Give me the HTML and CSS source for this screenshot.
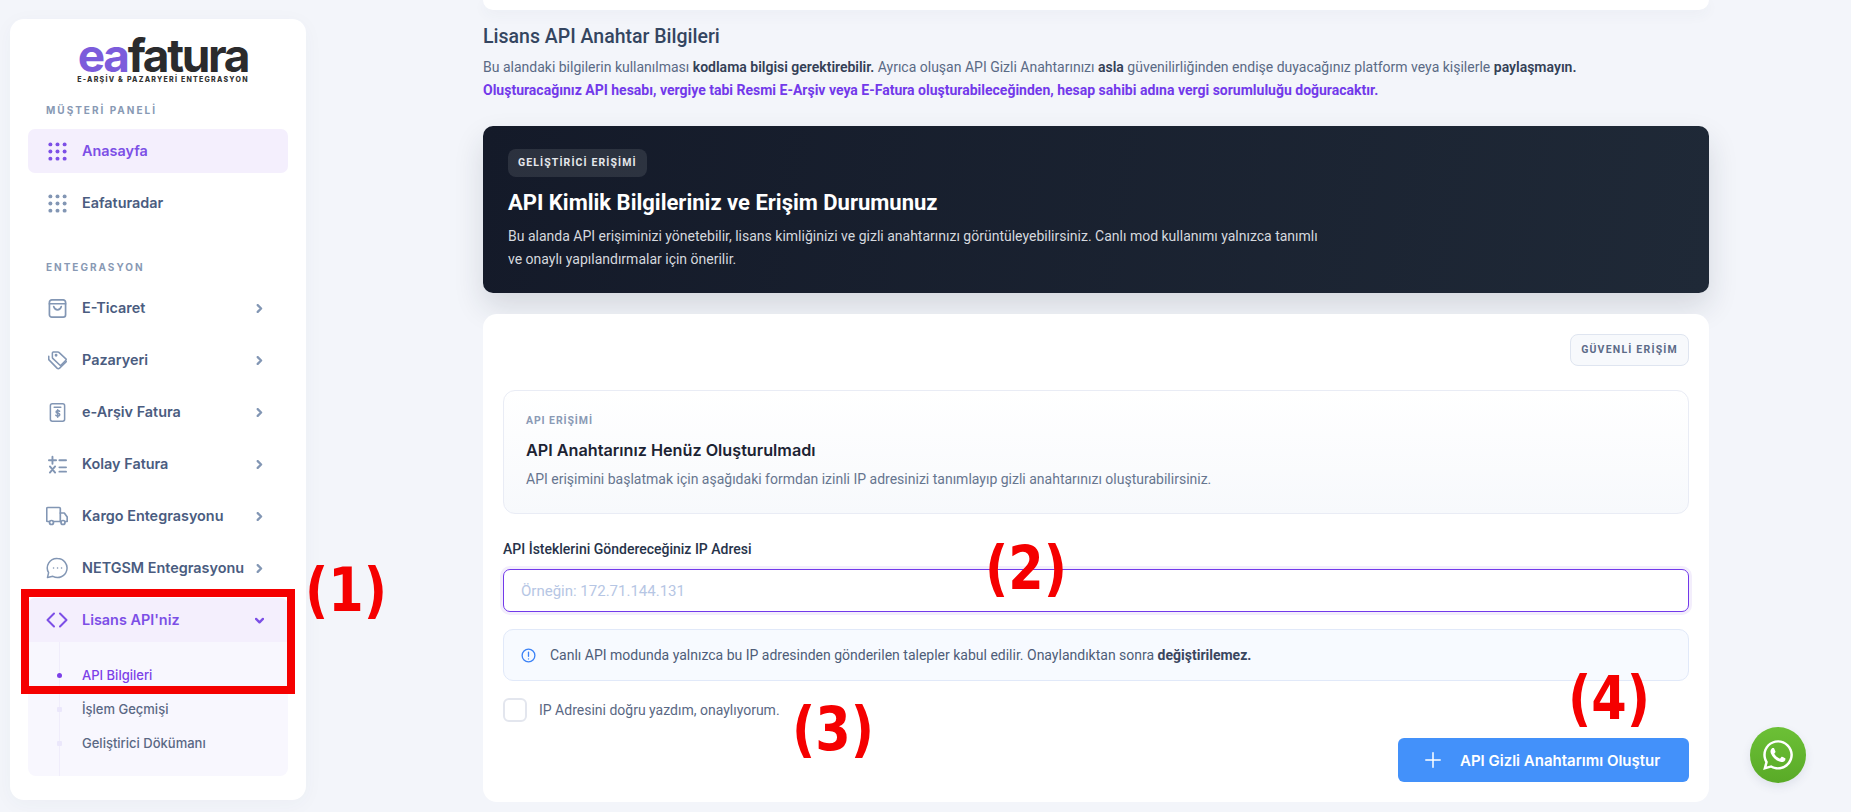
FILE: index.html
```html
<!DOCTYPE html>
<html lang="tr">
<head>
    <meta charset="UTF-8">
    <title>Lisans API Anahtar Bilgileri</title>
    <link rel="stylesheet" href="styles.css">
</head>
<body>
    <div class="page">
        <aside class="sidebar">
            <div class="logo">
                <div class="logo-name"><span class="logo-ea">ea</span>fatura</div>
                <div class="logo-sub">E-ARŞİV &amp; PAZARYERİ ENTEGRASYON</div>
            </div>

            <div class="nav-label">MÜŞTERİ PANELİ</div>
            <nav class="nav">
                <a class="nav-item active">
                    <svg class="nav-icon" viewBox="0 0 20 20" fill="currentColor"><circle cx="2.500" cy="2.500" r="2.100"/><circle cx="10" cy="2.500" r="2.100"/><circle cx="17.500" cy="2.500" r="2.100"/><circle cx="2.500" cy="10" r="2.100"/><circle cx="10" cy="10" r="2.100"/><circle cx="17.500" cy="10" r="2.100"/><circle cx="2.500" cy="17.500" r="2.100"/><circle cx="10" cy="17.500" r="2.100"/><circle cx="17.500" cy="17.500" r="2.100"/></svg>
                    <span class="nav-text">Anasayfa</span>
                </a>
                <a class="nav-item">
                    <svg class="nav-icon" viewBox="0 0 20 20" fill="currentColor"><circle cx="2.500" cy="2.500" r="2.100"/><circle cx="10" cy="2.500" r="2.100"/><circle cx="17.500" cy="2.500" r="2.100"/><circle cx="2.500" cy="10" r="2.100"/><circle cx="10" cy="10" r="2.100"/><circle cx="17.500" cy="10" r="2.100"/><circle cx="2.500" cy="17.500" r="2.100"/><circle cx="10" cy="17.500" r="2.100"/><circle cx="17.500" cy="17.500" r="2.100"/></svg>
                    <span class="nav-text">Eafaturadar</span>
                </a>
            </nav>

            <div class="nav-label second">ENTEGRASYON</div>
            <nav class="nav">
                <a class="nav-item">
                    <svg class="nav-icon" viewBox="0 0 20 20" fill="none" stroke="currentColor" stroke-width="1.800" stroke-linecap="round" stroke-linejoin="round"><path d="M4 1h12a2.500 2.500 0 0 1 2.500 2.500v13A2.500 2.500 0 0 1 16 19H4a2.500 2.500 0 0 1-2.500-2.500v-13A2.500 2.500 0 0 1 4 1z"/><path d="M1.500 5h17"/><path d="M6 8c.8 2.400 2.200 3.500 4 3.500s3.200-1.100 4-3.500"/></svg>
                    <span class="nav-text">E-Ticaret</span>
                    <svg class="chevron" viewBox="0 0 10 10" fill="none" stroke="currentColor" stroke-width="2.500" stroke-linecap="round" stroke-linejoin="round"><path d="M3 1.200L6.800 5 3 8.800"/></svg>
                </a>
                <a class="nav-item">
                    <svg class="nav-icon" viewBox="0 0 20 20" fill="none" stroke="currentColor" stroke-width="1.600" stroke-linecap="round" stroke-linejoin="round"><path d="M5.500 1h5a1.500 1.500 0 0 1 1 .4l7.300 6.900a1 1 0 0 1 0 1.400l-5 5.100a1 1 0 0 1-1.400 0L5 7.800a1.500 1.500 0 0 1-.4-1V2.300A1.300 1.300 0 0 1 5.500 1z"/><path d="M.8 5.500v3.600l8.700 8.900a2 2 0 0 0 2.700 0l7-6.800"/><circle cx="8.500" cy="4.500" r=".7"/></svg>
                    <span class="nav-text">Pazaryeri</span>
                    <svg class="chevron" viewBox="0 0 10 10" fill="none" stroke="currentColor" stroke-width="2.500" stroke-linecap="round" stroke-linejoin="round"><path d="M3 1.200L6.800 5 3 8.800"/></svg>
                </a>
                <a class="nav-item">
                    <svg class="nav-icon" viewBox="0 0 20 20" fill="none" stroke="currentColor" stroke-width="1.600" stroke-linecap="round" stroke-linejoin="round"><rect x="2.500" y=".8" width="15" height="18.400" rx="2"/><path d="M6.500 4.500h7"/><path d="M12.200 8.700c-.5-.8-3.700-1-3.700.7 0 2 3.900 1 3.900 3 0 1.700-3.500 1.500-4.100.5"/><path d="M10.200 7.200v7.800"/></svg>
                    <span class="nav-text">e-Arşiv Fatura</span>
                    <svg class="chevron" viewBox="0 0 10 10" fill="none" stroke="currentColor" stroke-width="2.500" stroke-linecap="round" stroke-linejoin="round"><path d="M3 1.200L6.800 5 3 8.800"/></svg>
                </a>
                <a class="nav-item">
                    <svg class="nav-icon" viewBox="0 0 20 20" fill="none" stroke="currentColor" stroke-width="2" stroke-linecap="round"><path d="M1 5.500h7.500M4.700 1.800v7.400M12 5.500h7"/><path d="M2 12l5.500 6.500M7.500 12L2 18.500M12 13h7M12 17.500h7"/></svg>
                    <span class="nav-text">Kolay Fatura</span>
                    <svg class="chevron" viewBox="0 0 10 10" fill="none" stroke="currentColor" stroke-width="2.500" stroke-linecap="round" stroke-linejoin="round"><path d="M3 1.200L6.800 5 3 8.800"/></svg>
                </a>
                <a class="nav-item">
                    <svg class="nav-icon wide" viewBox="0 0 22 20" fill="none" stroke="currentColor" stroke-width="1.700" stroke-linecap="round" stroke-linejoin="round"><path d="M3.500 15.500h-2a.8.8 0 0 1-.8-.8V2.500a1 1 0 0 1 1-1h11.600a1 1 0 0 1 1 1v13h-7"/><path d="M14.300 7h4l2.900 4v4.500h-1.700M14.300 15.500h.7"/><circle cx="5.500" cy="16.500" r="2"/><circle cx="17" cy="16.500" r="2"/></svg>
                    <span class="nav-text">Kargo Entegrasyonu</span>
                    <svg class="chevron" viewBox="0 0 10 10" fill="none" stroke="currentColor" stroke-width="2.500" stroke-linecap="round" stroke-linejoin="round"><path d="M3 1.200L6.800 5 3 8.800"/></svg>
                </a>
                <a class="nav-item">
                    <svg class="nav-icon wide" viewBox="0 0 22 22" fill="none" stroke="currentColor" stroke-width="1.500" stroke-linecap="round" stroke-linejoin="round"><path d="M11.500 1.500a9.500 9.500 0 1 1-4.600 17.800L1.500 20.500l1.100-4.800A9.500 9.500 0 0 1 11.500 1.500z"/><path d="M7.500 11h.1M11.500 11h.1M15.500 11h.1"/></svg>
                    <span class="nav-text">NETGSM Entegrasyonu</span>
                    <svg class="chevron" viewBox="0 0 10 10" fill="none" stroke="currentColor" stroke-width="2.500" stroke-linecap="round" stroke-linejoin="round"><path d="M3 1.200L6.800 5 3 8.800"/></svg>
                </a>
                <div class="nav-group">
                    <a class="nav-item open">
                        <svg class="nav-icon wide" viewBox="0 0 22 20" fill="none" stroke="currentColor" stroke-width="2" stroke-linecap="round" stroke-linejoin="round"><path d="M8 3.500L1.500 10 8 16.500M14 3.500l6.500 6.500-6.500 6.500"/></svg>
                        <span class="nav-text">Lisans API'niz</span>
                        <svg class="chevron" viewBox="0 0 10 10" fill="none" stroke="currentColor" stroke-width="2.600" stroke-linecap="round" stroke-linejoin="round"><path d="M1.200 3.200L5 7l3.800-3.800"/></svg>
                    </a>
                    <div class="subnav">
                        <ul class="subnav-list">
                            <li class="active">API Bilgileri</li>
                            <li>İşlem Geçmişi</li>
                            <li>Geliştirici Dökümanı</li>
                        </ul>
                    </div>
                </div>
            </nav>
        </aside>

        <main class="main">
            <div class="top-strip"></div>

            <h2 class="page-title">Lisans API Anahtar Bilgileri</h2>
            <p class="page-text">Bu alandaki bilgilerin kullanılması <b>kodlama bilgisi gerektirebilir.</b> Ayrıca oluşan API Gizli Anahtarınızı <b>asla</b> güvenilirliğinden endişe duyacağınız platform veya kişilerle <b>paylaşmayın.</b></p>
            <p class="page-text warn">Oluşturacağınız API hesabı, vergiye tabi Resmi E-Arşiv veya E-Fatura oluşturabileceğinden, hesap sahibi adına vergi sorumluluğu doğuracaktır.</p>

            <section class="banner">
                <span class="banner-badge">GELİŞTİRİCİ ERİŞİMİ</span>
                <h3 class="banner-title">API Kimlik Bilgileriniz ve Erişim Durumunuz</h3>
                <p class="banner-text">Bu alanda API erişiminizi yönetebilir, lisans kimliğinizi ve gizli anahtarınızı görüntüleyebilirsiniz. Canlı mod kullanımı yalnızca tanımlı ve onaylı yapılandırmalar için önerilir.</p>
            </section>

            <section class="card">
                <div class="card-head">
                    <span class="secure-badge">GÜVENLİ ERİŞİM</span>
                </div>

                <div class="status-box">
                    <div class="status-label">API ERİŞİMİ</div>
                    <div class="status-title">API Anahtarınız Henüz Oluşturulmadı</div>
                    <div class="status-text">API erişimini başlatmak için aşağıdaki formdan izinli IP adresinizi tanımlayıp gizli anahtarınızı oluşturabilirsiniz.</div>
                </div>

                <label class="field-label" for="ipInput">API İsteklerini Göndereceğiniz IP Adresi</label>
                <input class="field-input" id="ipInput" type="text" placeholder="Örneğin: 172.71.144.131">

                <div class="info-box">
                    <svg class="info-icon" viewBox="0 0 16 16" fill="none" stroke="currentColor" stroke-width="1.400" stroke-linecap="round"><circle cx="8" cy="8" r="6.800"/><path d="M8 4.300v4.500M8 11.500v.1"/></svg>
                    <span>Canlı API modunda yalnızca bu IP adresinden gönderilen talepler kabul edilir. Onaylandıktan sonra <b>değiştirilemez.</b></span>
                </div>

                <label class="check-row">
                    <span class="check-box"></span>
                    <span>IP Adresini doğru yazdım, onaylıyorum.</span>
                </label>

                <div class="card-actions">
                    <button class="create-btn">
                        <svg class="plus-icon" viewBox="0 0 16 16" fill="none" stroke="currentColor" stroke-width="1.500" stroke-linecap="round"><path d="M8 .8v14.400M.8 8h14.400"/></svg>
                        API Gizli Anahtarımı Oluştur
                    </button>
                </div>
            </section>
        </main>
    </div>

    <a class="whatsapp">
        <svg viewBox="0 0 448 512" fill="currentColor"><path d="M380.9 97.1C339 55.1 283.2 32 223.9 32c-122.400 0-222 99.600-222 222 0 39.100 10.200 77.300 29.600 111L0 480l117.700-30.900c32.400 17.700 68.900 27 106.100 27h.1c122.300 0 224.100-99.600 224.100-222 0-59.300-25.200-115-67.100-157zm-157 341.600c-33.200 0-65.700-8.900-94-25.700l-6.700-4-69.800 18.300L72 359.200l-4.400-7c-18.500-29.400-28.200-63.300-28.200-98.200 0-101.700 82.800-184.500 184.600-184.500 49.300 0 95.600 19.200 130.400 54.100 34.800 34.900 56.200 81.200 56.100 130.500 0 101.800-84.900 184.600-186.600 184.600zm101.200-138.200c-5.500-2.800-32.800-16.200-37.900-18-5.100-1.900-8.800-2.800-12.500 2.800-3.700 5.600-14.300 18-17.600 21.800-3.200 3.700-6.500 4.200-12 1.400-32.600-16.300-54-29.100-75.500-66-5.700-9.800 5.700-9.100 16.300-30.300 1.800-3.700.9-6.900-.5-9.700-1.400-2.800-12.500-30.100-17.100-41.200-4.500-10.800-9.100-9.300-12.500-9.500-3.200-.2-6.900-.2-10.600-.2-3.700 0-9.700 1.400-14.800 6.900-5.100 5.600-19.400 19-19.400 46.300 0 27.300 19.900 53.700 22.600 57.400 2.800 3.700 39.100 59.700 94.800 83.800 35.200 15.200 49 16.500 66.600 13.900 10.700-1.600 32.800-13.400 37.400-26.400 4.600-13 4.600-24.100 3.200-26.400-1.300-2.500-5-3.900-10.500-6.600z"/></svg>
    </a>

    <!-- kırmızı işaretler -->
    <div class="mark-box"></div>
    <div class="mark mark-1">(1)</div>
    <div class="mark mark-2">(2)</div>
    <div class="mark mark-3">(3)</div>
    <div class="mark mark-4">(4)</div>
</body>
</html>
```

FILE: styles.css
```css
/* Genel */
* {
    box-sizing: border-box;
}
html, body {
    height: 100%;
}
body {
    margin: 0;
    background: #f3f5fa;
    font-family: Roboto, Arial, sans-serif;
    color: #4b5b78;
    overflow: hidden;
    position: relative;
}
.page {
    display: flex;
    align-items: flex-start;
    height: 812px;
}

/* Sidebar */
.sidebar {
    width: 296px;
    height: 781px;
    margin: 19px 0 0 10px;
    padding: 24px 18px 0;
    background: #fff;
    border-radius: 14px;
    box-shadow: 0 4px 20px rgba(60, 70, 110, 0.04);
    font-family: Inter, "Noto Sans", sans-serif;
    flex-shrink: 0;
}
.logo {
    height: 39px;
    margin-bottom: 20px;
    padding-left: 10px;
    text-align: center;
}
.logo-name {
    height: 25px;
    font-size: 46px;
    line-height: 25px;
    font-weight: 700;
    letter-spacing: -2.3px;
    color: #2b2b2d;
}
.logo-ea {
    color: #7c5cdb;
}
.logo-sub {
    margin-top: 8px;
    font-size: 7px;
    line-height: 7px;
    font-weight: 800;
    letter-spacing: 1.25px;
    color: #333;
    white-space: nowrap;
}
.nav-label {
    padding-left: 18px;
    margin-bottom: 11px;
    font-size: 10px;
    line-height: 16px;
    font-weight: 700;
    letter-spacing: 2px;
    color: #8899b4;
}
.nav-label.second {
    margin-top: 34px;
}
.nav {
    display: flex;
    flex-direction: column;
    gap: 8px;
}
.nav-item {
    display: flex;
    align-items: center;
    height: 44px;
    padding: 0 24px 0 20px;
    border-radius: 7px;
    color: #4a5c80;
    font-size: 14.4px;
    font-weight: 600;
}
.nav-item.active {
    background: #f4effd;
    color: #7c4fe6;
}
.nav-item.open {
    background: #f4effd;
    color: #7c4fe6;
    border-radius: 7px 7px 0 0;
}
.nav-icon {
    width: 19px;
    height: 19px;
    margin-right: 15px;
    color: #8296b4;
    flex-shrink: 0;
}
.nav-icon.wide {
    width: 22px;
    height: 22px;
    margin-left: -2px;
    margin-right: 14px;
}
.nav-item.active .nav-icon,
.nav-item.open .nav-icon {
    color: #7c4fe6;
}
.nav-text {
    flex: 1;
    margin-top: -2px;
    white-space: nowrap;
}
.chevron {
    width: 9px;
    height: 9px;
    color: #8296b4;
    flex-shrink: 0;
}
.nav-item.open .chevron {
    color: #7c4fe6;
}
.subnav {
    background: #f8f7fe;
    border-radius: 0 0 8px 8px;
    padding-left: 31px;
}
.subnav-list {
    list-style: none;
    margin: 0;
    padding: 16px 0;
    border-left: 1px solid #f0edfb;
}
.subnav-list li {
    position: relative;
    height: 34px;
    line-height: 34px;
    padding-left: 22px;
    font-size: 13px;
    font-weight: 500;
    color: #5a6884;
}
.subnav-list li::before {
    content: "";
    position: absolute;
    left: -3px;
    top: 15px;
    width: 5px;
    height: 5px;
    border-radius: 1px;
    background: #ebe7fb;
}
.subnav-list li.active {
    color: #7c3fe8;
}
.subnav-list li.active::before {
    border-radius: 50%;
    background: #7c3fe8;
}

/* Ana alan */
.main {
    width: 1226px;
    margin-left: 177px;
    flex-shrink: 0;
}
.top-strip {
    height: 10px;
    background: #fff;
    border-radius: 0 0 12px 12px;
    box-shadow: 0 4px 14px rgba(60, 70, 110, 0.05);
}
.page-title {
    margin: 16px 0 8px;
    font-size: 19.5px;
    line-height: 22px;
    font-weight: 500;
    color: #344560;
}
.page-text {
    margin: 0;
    font-size: 14px;
    line-height: 23px;
    color: #5a6a85;
}
.page-text b {
    font-weight: 600;
    color: #344056;
}
.page-text.warn {
    font-weight: 700;
    color: #7239ea;
}

/* Koyu bant */
.banner {
    height: 167px;
    margin-top: 24px;
    padding: 23px 25px;
    border-radius: 10px;
    background: linear-gradient(100deg, #141a29, #1f2937);
    box-shadow: 0 14px 30px rgba(30, 40, 60, 0.14);
    color: #fff;
}
.banner-badge {
    display: inline-block;
    height: 28px;
    padding: 0 10px;
    border-radius: 8px;
    background: rgba(255, 255, 255, 0.1);
    font-size: 10.5px;
    line-height: 28px;
    font-weight: 700;
    letter-spacing: 1.1px;
    color: #e5e7eb;
    vertical-align: top;
}
.banner-title {
    margin: 11px 0 7px;
    font-size: 22px;
    line-height: 30px;
    font-weight: 700;
}
.banner-text {
    margin: 0;
    max-width: 820px;
    font-size: 14px;
    line-height: 23px;
    color: #d5d8de;
}

/* Kart */
.card {
    height: 488px;
    margin-top: 21px;
    padding: 20px;
    background: #fff;
    border-radius: 14px;
}
.card-head {
    display: flex;
    justify-content: flex-end;
    margin-bottom: 24px;
}
.secure-badge {
    height: 32px;
    padding: 0 10px;
    border: 1px solid #dfe5f0;
    border-radius: 8px;
    background: #f7f9fc;
    font-size: 10.5px;
    line-height: 30px;
    font-weight: 700;
    letter-spacing: 1.2px;
    color: #5c6b88;
}
.status-box {
    height: 124px;
    padding: 22px 22px 0;
    border: 1px solid #e9ecf5;
    border-radius: 12px;
    background: linear-gradient(#fff, #f7f9fc);
}
.status-label {
    font-size: 10.5px;
    line-height: 16px;
    font-weight: 700;
    letter-spacing: 0.9px;
    color: #8a9ab5;
}
.status-title {
    margin-top: 9px;
    font-family: Inter, "Noto Sans", sans-serif;
    font-size: 16.2px;
    line-height: 24px;
    font-weight: 600;
    color: #1c2333;
}
.status-text {
    margin-top: 6px;
    font-size: 14px;
    line-height: 22px;
    color: #66758f;
}
.field-label {
    display: block;
    margin-top: 25px;
    font-size: 14px;
    line-height: 20px;
    font-weight: 500;
    color: #27334a;
}
.field-input {
    display: block;
    width: 100%;
    height: 43px;
    margin-top: 10px;
    padding: 0 17px;
    border: 1px solid #7239ea;
    border-radius: 7px;
    box-shadow: 0 0 0 3px #f3eefc;
    font-family: Roboto, Arial, sans-serif;
    font-size: 15px;
    outline: none;
}
.field-input::placeholder {
    color: #b6c6e4;
    opacity: 1;
}
.info-box {
    display: flex;
    align-items: center;
    height: 52px;
    margin-top: 17px;
    padding: 0 17px;
    border: 1px solid #e1e9f9;
    border-radius: 10px;
    background: #f7faff;
    font-size: 14px;
    color: #4e5d78;
}
.info-box b {
    font-weight: 700;
    color: #3a465e;
}
.info-icon {
    width: 15px;
    height: 15px;
    margin-right: 14px;
    color: #3b82f6;
    flex-shrink: 0;
}
.check-row {
    display: flex;
    align-items: center;
    gap: 12px;
    margin-top: 17px;
    font-size: 14px;
    line-height: 24px;
    color: #5a6884;
}
.check-box {
    width: 24px;
    height: 24px;
    border: 2px solid #e3e6ee;
    border-radius: 6px;
    background: #fff;
}
.card-actions {
    display: flex;
    justify-content: flex-end;
    margin-top: 16px;
}
.create-btn {
    display: flex;
    align-items: center;
    gap: 19px;
    width: 291px;
    height: 44px;
    padding: 0 0 0 27px;
    border: none;
    border-radius: 6px;
    background: #4391fa;
    color: #fff;
    font-family: Inter, "Noto Sans", sans-serif;
    font-size: 15px;
    font-weight: 600;
    cursor: pointer;
}
.plus-icon {
    width: 16px;
    height: 16px;
}

/* WhatsApp butonu */
.whatsapp {
    position: absolute;
    left: 1750px;
    top: 727px;
    width: 56px;
    height: 56px;
    display: flex;
    align-items: center;
    justify-content: center;
    border-radius: 50%;
    background: linear-gradient(#6cc036, #59aa27);
    box-shadow: 0 4px 10px rgba(60, 70, 110, 0.1);
    color: #fff;
}
.whatsapp svg {
    width: 30px;
    height: 34px;
}

/* Kırmızı işaretler */
.mark-box {
    position: absolute;
    left: 21px;
    top: 589px;
    width: 274px;
    height: 105px;
    border: 8px solid #f50000;
}
.mark {
    position: absolute;
    font-family: "DejaVu Sans", sans-serif;
    font-size: 60px;
    line-height: 60px;
    font-weight: 700;
    color: #f50000;
    transform: scaleX(0.85);
    transform-origin: left center;
}
.mark-1 { left: 305px; top: 560px; }
.mark-2 { left: 985px; top: 538px; }
.mark-3 { left: 792px; top: 699px; }
.mark-4 { left: 1568px; top: 668px; }
```
